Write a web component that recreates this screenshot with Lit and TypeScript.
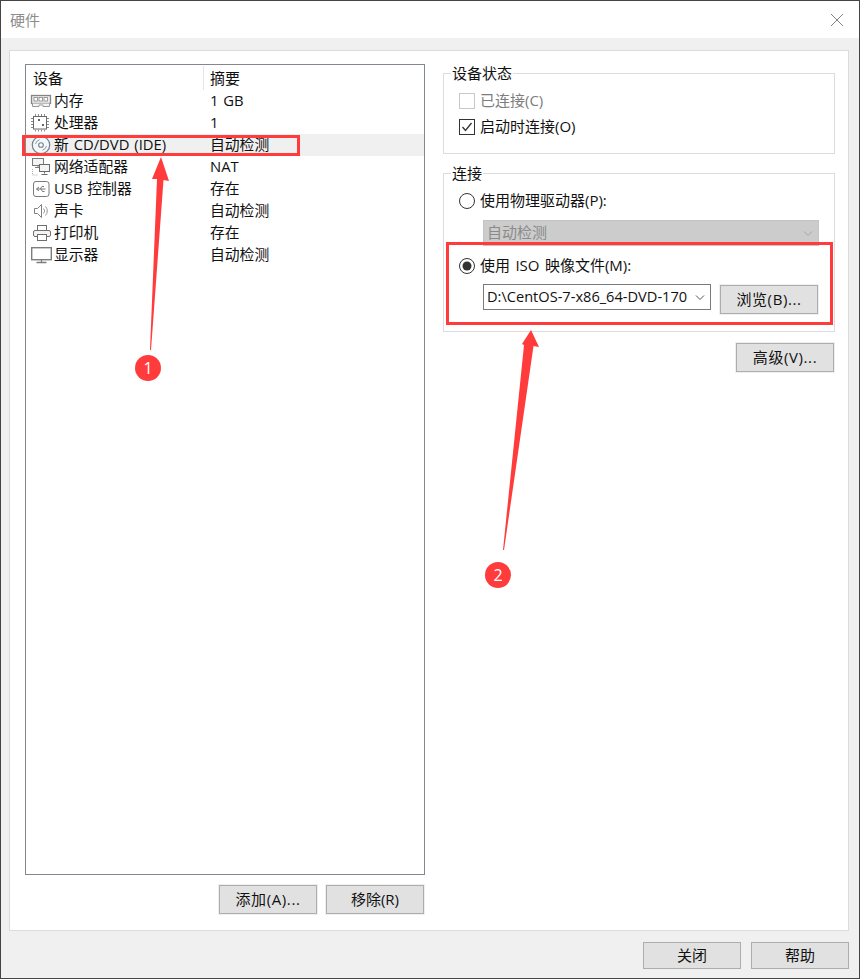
import { LitElement, html, css, svg } from "lit";
import { customElement } from "lit/decorators.js";

const icons: Record<string, unknown> = {
  mem: svg`<rect x="2.500" y="5.500" width="19" height="8" fill="#ececec" stroke="#858585" stroke-width="1.300"/><rect x="5" y="7.500" width="3.500" height="3.500" fill="#fff" stroke="#858585" stroke-width=".8"/><rect x="10" y="7.500" width="3.500" height="3.500" fill="#fff" stroke="#858585" stroke-width=".8"/><rect x="15" y="7.500" width="3.500" height="3.500" fill="#fff" stroke="#858585" stroke-width=".8"/><path d="M3.500 13.500v3h6.500v-1.500h4v1.500h6.500v-3" fill="#f4f4f4" stroke="#999"/>`,
  cpu: svg`<rect x="4.500" y="4.500" width="13" height="12.500" fill="#fff" stroke="#6a6a6a"/><path d="M2 6.500h2M2 9.500h2M2 12.500h2M2 15.500h2M18 6.500h2M18 9.500h2M18 12.500h2M18 15.500h2M6.500 2v2M9.500 2v2M12.500 2v2M15.500 2v2M6.500 17.500v2M9.500 17.500v2M12.500 17.500v2M15.500 17.500v2" stroke="#8a8a8a"/><rect x="9" y="7" width="2" height="2" fill="#666"/><rect x="13" y="12" width="2" height="2" fill="#666"/>`,
  cd: svg`<circle cx="12" cy="11" r="8.700" fill="#f4f7fa" stroke="#70808f" stroke-width="1.200"/><circle cx="12" cy="11" r="2.300" fill="#fff" stroke="#70808f" stroke-width="1.100"/><path d="M6.500 10a5.500 5.500 0 0 1 4-4.200M17.500 12a5.500 5.500 0 0 1-4 4.200" fill="none" stroke="#8b9cab"/>`,
  net: svg`<rect x="3.500" y="2.500" width="11" height="7" fill="#f4f4f4" stroke="#7a7a7a"/><path d="M9 9.500v2M6 11.500h5" stroke="#7a7a7a"/><rect x="10.500" y="8.500" width="10" height="7" fill="#f4f4f4" stroke="#6a6a6a"/><path d="M15.500 15.500v2M12.500 18.500h6" stroke="#6a6a6a"/><path d="M3.500 13v6h6" fill="none" stroke="#aaa" stroke-dasharray="1 1"/>`,
  usb: svg`<rect x="4.500" y="3.500" width="15.500" height="15" rx="2.500" fill="#fff" stroke="#7a7a7a"/><path d="M7.500 11h9M7.500 11l2.500-2M7.500 11l2.500 2M11 11l2-2.500h2M12 11l1.500 2.500h2" fill="none" stroke="#777"/>`,
  snd: svg`<path d="M5.500 8.500H8.500L12.500 4.500V17.500L8.500 13.500H5.500Z" fill="#fff" stroke="#808080"/><path d="M14.500 8.500a3.500 3.500 0 0 1 0 5M16.500 6.500a6.500 6.500 0 0 1 0 9" fill="none" stroke="#999"/>`,
  prn: svg`<rect x="8.500" y="3.500" width="9" height="5" fill="#fff" stroke="#6f6f6f"/><rect x="4.500" y="8.500" width="17" height="6" rx="1.500" fill="#f4f4f4" stroke="#6f6f6f"/><rect x="8.500" y="12.500" width="9" height="6" fill="#fff" stroke="#6f6f6f"/>`,
  mon: svg`<rect x="2.700" y="3.700" width="19.600" height="12" fill="#fff" stroke="#7d7d7d" stroke-width="1.400"/><path d="M12.500 16v2M7.500 18.500h10" stroke="#7d7d7d" stroke-width="1.300"/>`,
};

const rows = [
  ["mem", "内存", "1 GB", false],
  ["cpu", "处理器", "1", false],
  ["cd", "新 CD/DVD (IDE)", "自动检测", true],
  ["net", "网络适配器", "NAT", false],
  ["usb", "USB 控制器", "存在", false],
  ["snd", "声卡", "自动检测", false],
  ["prn", "打印机", "存在", false],
  ["mon", "显示器", "自动检测", false],
] as const;

const chevron = (c: string) => html`<svg class="chev" width="10" height="7" viewBox="0 0 10 7"><path d="M1 1.500 5 5.500 9 1.500" fill="none" stroke="${c}"/></svg>`;

@customElement("app-root")
export class AppRoot extends LitElement {
  static styles = css`
    :host {
      display: block;
      position: relative;
      width: 860px;
      height: 979px;
      overflow: hidden;
      font: 15px/20px "Open Sans", "Noto Sans CJK SC", sans-serif;
      color: #111;
    }
    .win {
      box-sizing: border-box;
      height: 979px;
      border: 1px solid #444;
      background: #f0f0f0;
      display: flex;
      flex-direction: column;
    }
    .title {
      height: 37px;
      flex: none;
      background: #fff;
      display: flex;
      align-items: center;
      justify-content: space-between;
      padding: 0 15px 0 9px;
      color: #8d8d8d;
    }
    .panel {
      flex: none;
      box-sizing: border-box;
      height: 881px;
      margin: 12px 10px 0 8px;
      background: #fff;
      border: 1px solid #dcdcdc;
      padding: 13px 13px 15px 15px;
      display: grid;
      grid-template-columns: 400px 392px;
      column-gap: 18px;
    }
    .left { display: flex; flex-direction: column; }
    .list {
      box-sizing: border-box;
      height: 811px;
      border: 1px solid #828790;
      padding-top: 1px;
    }
    .head { display: grid; grid-template-columns: 177px 1fr; height: 24px; align-items: center; }
    .head span { padding-left: 7px; line-height: 24px; }
    .head span + span { border-left: 1px solid #e5e5e5; padding-left: 6px; }
    .row { display: grid; grid-template-columns: 177px 1fr; height: 22px; align-items: center; white-space: nowrap; word-spacing: 1px; font-size: 14.800px; }
    .row.sel { background: #f0f0f0; }
    .name { display: flex; align-items: center; padding-left: 3px; }
    .name svg { flex: none; width: 24px; height: 22px; margin-right: 1px; }
    .name span { padding-bottom: 2px; }
    .val { padding: 0 0 2px 7px; }
    .actions { display: flex; justify-content: flex-end; gap: 9px; margin-top: 10px; padding-right: 1px; }
    .btn {
      box-sizing: border-box;
      width: 98px;
      height: 29px;
      background: #e1e1e1;
      border: 1px solid #adadad;
      outline: 1px solid #efefef;
      font: inherit;
      color: #111;
      padding: 0 0 2px;
      text-align: center;
    }
    .wide { letter-spacing: 0.6px; }
    .right { display: flex; flex-direction: column; padding-top: 9px; }
    fieldset {
      margin: 0;
      border: 1px solid #dcdcdc;
      padding: 0;
      min-width: 0;
      position: relative;
      box-sizing: border-box;
    }
    .gb1 { height: 81px; padding: 19px 0 0 15px; }
    .gb2 { height: 159px; margin-top: 19px; padding: 19px 0 0 15px; }
    .legend { position: absolute; left: 7px; top: -11px; background: #fff; padding: 0 1px; }
    .opt { display: flex; align-items: center; gap: 5px; height: 16px; white-space: nowrap; }
    .opt span.t { padding-bottom: 2px; }
    .opt + .opt { margin-top: 10px; }
    .box {
      box-sizing: border-box;
      width: 16px;
      height: 16px;
      flex: none;
      border: 1px solid #333;
      background: #fff;
      display: block;
    }
    .box.dis { border-color: #c8c8c8; }
    .dim { color: #7d7d7d; }
    .radio { width: 16px; height: 16px; flex: none; display: block; }
    .indent { margin-left: 24px; }
    .sel-dis {
      box-sizing: border-box;
      width: 336px;
      height: 26px;
      margin-top: 11px;
      margin-bottom: 12px;
      background: #cccccc;
      border: 1px solid #c4c4c4;
      color: #8a8a8a;
      display: flex;
      align-items: center;
      justify-content: space-between;
      padding: 0 5px 0 3px;
    }
    .sel-dis span { padding-bottom: 2px; }
    .iso-t { word-spacing: 1.500px; }
    .iso { display: flex; align-items: flex-start; gap: 9px; margin-top: 10px; }
    .sel-iso {
      box-sizing: border-box;
      width: 228px;
      height: 26px;
      background: #fff;
      border: 1px solid #7a7a7a;
      display: flex;
      align-items: center;
      justify-content: space-between;
      padding: 0 5px 0 3px;
      white-space: nowrap;
      font-size: 14.600px;
    }
    .sel-iso span { padding-bottom: 2px; }
    .iso .btn { margin-top: 1px; }
    .adv { display: flex; justify-content: flex-end; margin-top: 11px; padding-right: 1px; }
    .foot { display: flex; justify-content: flex-end; gap: 10px; padding: 11px 10px 0 0; }
    .foot .btn { height: 27px; }
    .overlay { position: absolute; left: 0; top: 0; pointer-events: none; }
    .badge {
      position: absolute;
      width: 26px;
      height: 26px;
      border-radius: 50%;
      background: #ff3b3b;
      color: #fff;
      font: 16px/26px "Open Sans", sans-serif;
      text-align: center;
    }
    .b1 { left: 135px; top: 355px; }
    .b2 { left: 485px; top: 562px; }
  `;

  render() {
    return html`
      <div class="win">
        <div class="title">
          <span>硬件</span>
          <svg width="14" height="14" viewBox="0 0 14 14"><path d="M1 1 13 13M13 1 1 13" stroke="#808080"/></svg>
        </div>
        <div class="panel">
          <div class="left">
            <div class="list">
              <div class="head"><span>设备</span><span>摘要</span></div>
              ${rows.map(
                ([ic, n, v, s]) => html`<div class="row ${s ? "sel" : ""}">
                  <div class="name"><svg viewBox="0 0 24 22">${icons[ic]}</svg><span>${n}</span></div>
                  <div class="val">${v}</div>
                </div>`
              )}
            </div>
            <div class="actions">
              <button class="btn wide">添加(A)...</button>
              <button class="btn">移除(R)</button>
            </div>
          </div>
          <div class="right">
            <fieldset class="gb1">
              <span class="legend">设备状态</span>
              <div class="opt dim"><span class="box dis"></span><span class="t">已连接(C)</span></div>
              <div class="opt">
                <svg class="box" viewBox="0 0 14 14"><path d="M2.500 7 5.500 10.500 11.500 3" fill="none" stroke="#333" stroke-width="1.300"/></svg><span class="t">启动时连接(O)</span>
              </div>
            </fieldset>
            <fieldset class="gb2">
              <span class="legend">连接</span>
              <div class="opt">
                <svg class="radio" viewBox="0 0 16 16"><circle cx="8" cy="8" r="7.500" fill="#fff" stroke="#333"/></svg><span class="t">使用物理驱动器(P):</span>
              </div>
              <div class="sel-dis indent"><span>自动检测</span>${chevron("#a8a8a8")}</div>
              <div class="opt">
                <svg class="radio" viewBox="0 0 16 16"><circle cx="8" cy="8" r="7.500" fill="#fff" stroke="#333"/><circle cx="8" cy="8" r="4.500" fill="#333"/></svg><span class="t iso-t">使用 ISO 映像文件(M):</span>
              </div>
              <div class="iso indent">
                <div class="sel-iso"><span>D:\\CentOS-7-x86_64-DVD-170</span>${chevron("#555")}</div>
                <button class="btn wide">浏览(B)...</button>
              </div>
            </fieldset>
            <div class="adv"><button class="btn wide">高级(V)...</button></div>
          </div>
        </div>
        <div class="foot">
          <button class="btn">关闭</button>
          <button class="btn">帮助</button>
        </div>
      </div>
      <svg class="overlay" width="860" height="979" viewBox="0 0 860 979">
        <rect x="23.500" y="136.500" width="275" height="18" fill="none" stroke="#ff3b3b" stroke-width="3"/>
        <rect x="447.500" y="243.500" width="384" height="80" fill="none" stroke="#ff3b3b" stroke-width="3"/>
        <polygon points="161,157 169,181 163.500,180 151,350 150,350 157,179 152,179" fill="#ff3b3b"/>
        <polygon points="531,330 539,347 533.500,346 504,550 503,550 524,345 522,344" fill="#ff3b3b"/>
      </svg>
      <div class="badge b1">1</div>
      <div class="badge b2">2</div>
    `;
  }
}
